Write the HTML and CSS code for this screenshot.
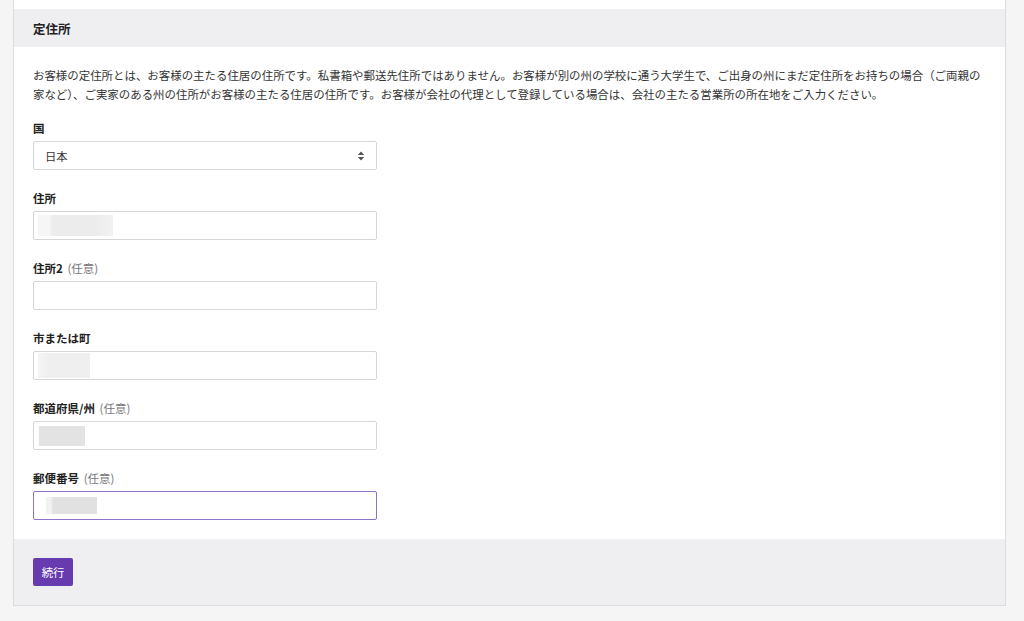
FILE: index.html
```html
<!DOCTYPE html>
<html lang="ja">
<head>
<meta charset="utf-8">
<title>定住所</title>
<link rel="stylesheet" href="styles.css">
</head>
<body>
<div class="card">
  <div class="card-tail"></div>
  <div class="card-header">定住所</div>
  <div class="card-body">
    <p class="intro">お客様の定住所とは、お客様の主たる住居の住所です。私書箱や郵送先住所ではありません。お客様が別の州の学校に通う大学生で、ご出身の州にまだ定住所をお持ちの場合（ご両親の家など）、ご実家のある州の住所がお客様の主たる住居の住所です。お客様が会社の代理として登録している場合は、会社の主たる営業所の所在地をご入力ください。</p>

    <div class="field">
      <div class="label">国</div>
      <div class="control select">
        <span class="value">日本</span>
        <svg class="arrows" width="8" height="10" viewBox="0 0 8 10"><path d="M4 0.5 L7.2 4 H0.8 Z M4 9.5 L7.2 6 H0.8 Z" fill="#555"/></svg>
      </div>
    </div>

    <div class="field">
      <div class="label">住所</div>
      <div class="control"><span class="redact r1"></span></div>
    </div>

    <div class="field">
      <div class="label">住所2 <span class="opt">(任意)</span></div>
      <div class="control"></div>
    </div>

    <div class="field">
      <div class="label">市または町</div>
      <div class="control"><span class="redact r3"></span></div>
    </div>

    <div class="field">
      <div class="label">都道府県/州 <span class="opt">(任意)</span></div>
      <div class="control"><span class="redact r4"></span></div>
    </div>

    <div class="field last">
      <div class="label">郵便番号 <span class="opt">(任意)</span></div>
      <div class="control focus"><span class="redact r5"></span></div>
    </div>
  </div>
  <div class="card-footer">
    <button class="btn" type="button">続行</button>
  </div>
</div>
</body>
</html>
```

FILE: styles.css
```css
html, body {
  margin: 0;
  padding: 0;
}
body {
  background: #f5f5f6;
  font-family: "Noto Sans CJK JP", "Noto Sans", "Liberation Sans", sans-serif;
  color: #333;
  height: 621px;
  overflow: hidden;
}
.card {
  margin-left: 13px;
  width: 991px;
  border: 1px solid #dcdcdf;
  border-top: none;
  background: #fff;
}
.card-tail {
  height: 9px;
  background: #fff;
}
.card-header {
  height: 38px;
  background: #efeff1;
  display: flex;
  align-items: center;
  padding: 0 19px;
  font-size: 12.5px;
  font-weight: bold;
  color: #222;
}
.card-body {
  padding: 19px 19px 19px 19px;
}
.intro {
  margin: 0 0 16px 0;
  font-size: 11.45px;
  line-height: 19px;
  color: #333;
}
.field {
  margin-bottom: 20px;
}
.field.last {
  margin-bottom: 0;
}
.label {
  font-size: 11.5px;
  line-height: 16px;
  font-weight: bold;
  color: #222;
  margin-bottom: 5px;
}
.opt {
  font-weight: normal;
  color: #777;
  margin-left: 2px;
}
.control {
  box-sizing: border-box;
  width: 344px;
  height: 29px;
  border: 1px solid #d6d6d9;
  border-radius: 2px;
  background: #fff;
  display: flex;
  align-items: center;
}
.control.focus {
  border-color: #8d74c9;
}
.select {
  justify-content: space-between;
  padding: 0 11px 0 11px;
  font-size: 11.3px;
  color: #333;
}
.arrows {
  display: block;
}
.redact {
  display: block;
  background: #ededee;
}
.r1 {
  width: 75px;
  height: 21px;
  margin-left: 4px;
  background: linear-gradient(90deg, #f6f6f6 0, #f6f6f6 12px, #ececec 14px, #ececec 58px, #f2f2f2 75px);
}
.r3 {
  width: 52px;
  height: 25px;
  margin-left: 4px;
  background: linear-gradient(90deg, #f5f5f5 0, #efefef 10px, #efefef 52px);
}
.r4 {
  width: 46px;
  height: 20px;
  margin-left: 5px;
  background: #e3e3e4;
}
.r5 {
  width: 51px;
  height: 17px;
  margin-left: 12px;
  background: linear-gradient(90deg, #f2f2f2 0, #f2f2f2 5px, #e1e1e2 7px, #e1e1e2 51px);
}
.card-footer {
  height: 66px;
  background: #efeff1;
  display: flex;
  align-items: center;
  padding: 0 19px;
}
.btn {
  height: 28px;
  width: 40px;
  border: none;
  border-radius: 2px;
  background: #673ab0;
  color: #fff;
  font-family: "Noto Sans CJK JP", "Noto Sans", sans-serif;
  font-size: 11.3px;
  font-weight: normal;
  padding: 0;
  cursor: pointer;
}
```
